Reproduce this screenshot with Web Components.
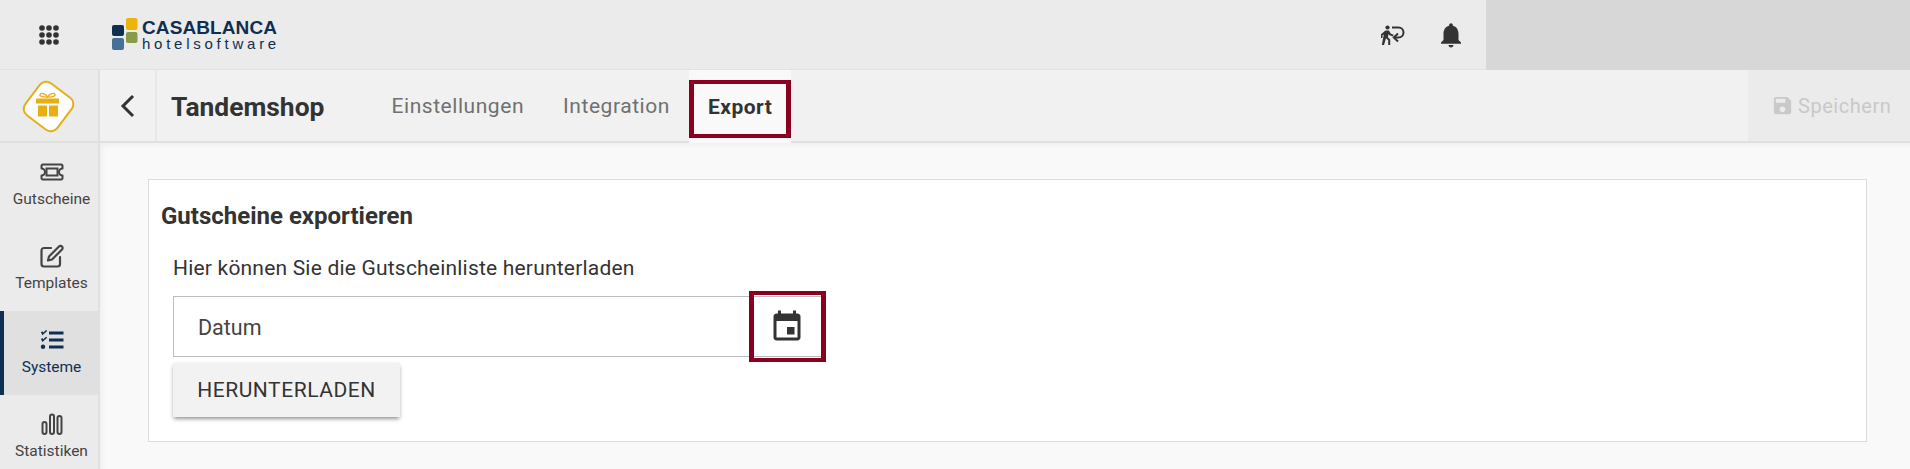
<!DOCTYPE html>
<html lang="de">
<head>
<meta charset="utf-8">
<title>Tandemshop</title>
<style>
  html, body { margin: 0; height: 100%; overflow: hidden; }
  body { font-family: Roboto, "Liberation Sans", sans-serif; color: #333; background: #f9f9f9; }
</style>
</head>
<body>
<app-shell>
  <top-bar slot="top"></top-bar>
  <side-nav slot="side">
    <nav-item label="Gutscheine" icon="ticket"></nav-item>
    <nav-item label="Templates" icon="edit"></nav-item>
    <nav-item label="Systeme" icon="list" active></nav-item>
    <nav-item label="Statistiken" icon="bars"></nav-item>
  </side-nav>
  <page-header slot="header" title="Tandemshop">
    <tab-item>Einstellungen</tab-item>
    <tab-item>Integration</tab-item>
    <tab-item active>Export</tab-item>
  </page-header>
  <export-card slot="main" heading="Gutscheine exportieren">
    <p>Hier können Sie die Gutscheinliste herunterladen</p>
    <date-field label="Datum"></date-field>
    <raised-button>HERUNTERLADEN</raised-button>
  </export-card>
</app-shell>

<script>
const ICONS = {
    ticket: `<svg width="24" height="18" viewBox="0 0 24 18" fill="none" stroke="currentColor" stroke-width="2"><path d="M2.500 1.500h19l1 1v3a3.500 3.500 0 0 0 0 7v3l-1 1h-19l-1-1v-3a3.500 3.500 0 0 0 0-7v-3z" stroke-linejoin="round"/><rect x="6.500" y="5.500" width="11" height="7"/></svg>`,
    edit: `<svg width="24" height="24" viewBox="0 0 24 24" fill="none" stroke="currentColor" stroke-width="2.200" stroke-linejoin="round" stroke-linecap="round"><path d="M11 4H4a2.500 2.500 0 0 0-2.500 2.500V20A2.500 2.500 0 0 0 4 22.500h13.500A2.500 2.500 0 0 0 20 20v-7"/><path d="M19 2.500a2.100 2.100 0 0 1 3 3L12 15.500l-4 1 1-4z"/></svg>`,
    list: `<svg width="24" height="20" viewBox="0 0 24 20" fill="currentColor"><path d="M9 1.500h14.500v3H9zM9 8.500h14.500v3H9zM9 15.500h14.500v3H9z"/><path d="M1 2.200l1.200-1 1.200 1.300L6 0l1.200 1L2.400 5.200zM1 8.900l1.200-1 1.200 1.300 2.600-2.500 1.200 1-4.800 4.200z"/><circle cx="3" cy="16.800" r="2.200"/></svg>`,
    bars: `<svg width="22" height="22" viewBox="0 0 22 22" fill="none" stroke="currentColor" stroke-width="2"><rect x="1.500" y="9" width="4" height="12" rx="2"/><rect x="9" y="1.500" width="4" height="19.500" rx="2"/><rect x="16.500" y="3" width="4" height="18" rx="2"/></svg>`
};

class AppShell extends HTMLElement {
    constructor() {
        super();
        this.attachShadow({mode: "open"}).innerHTML = /* html */`
        <style>
            :host {
                display: grid;
                grid-template-columns: 100px 1fr;
                grid-template-rows: 70px 73px 1fr;
                height: 469px;
                overflow: hidden;
            }
            ::slotted([slot="top"]) { grid-column: 1 / 3; }
            ::slotted([slot="side"]) { grid-row: 2 / 4; }
        </style>
        <slot name="top"></slot>
        <slot name="side"></slot>
        <slot name="header"></slot>
        <div style="box-shadow: inset 8px 8px 8px -8px rgba(0,0,0,.07); padding: 36px 43px 0 48px; min-width: 0;">
            <slot name="main"></slot>
        </div>
        `;
    }
}

class TopBar extends HTMLElement {
    constructor() {
        super();
        this.attachShadow({mode: "open"}).innerHTML = /* html */`
        <style>
            :host {
                display: flex;
                align-items: center;
                background: #ebebeb;
                color: #333;
                border-bottom: 1px solid #e2e2e2;
                box-sizing: border-box;
            }
            .apps { margin-left: 39px; display: flex; }
            .logo { margin-left: 53px; display: flex; gap: 4px; align-items: center; color: #0f2f50; }
            .words { display: flex; flex-direction: column; font-family: "Liberation Sans", Arial, sans-serif; }
            .brand { font-size: 19px; font-weight: 700; line-height: 17px; letter-spacing: .1px; }
            .sub { font-size: 15px; line-height: 15px; letter-spacing: 3.750px; white-space: nowrap; }
            .space { flex: 1; }
            .icon { display: flex; }
            .walk { margin-right: 31px; }
            .bell { margin-right: 20px; }
            .user { width: 424px; height: 70px; background: #d7d7d7; }
        </style>
        <span class="apps">
            <svg width="20" height="20" viewBox="0 0 20 20" fill="currentColor">
                <circle cx="3" cy="3" r="2.800"/><circle cx="10" cy="3" r="2.800"/><circle cx="17" cy="3" r="2.800"/>
                <circle cx="3" cy="10" r="2.800"/><circle cx="10" cy="10" r="2.800"/><circle cx="17" cy="10" r="2.800"/>
                <circle cx="3" cy="17" r="2.800"/><circle cx="10" cy="17" r="2.800"/><circle cx="17" cy="17" r="2.800"/>
            </svg>
        </span>
        <span class="logo">
            <svg width="26" height="33" viewBox="0 0 26 33">
                <rect x="0" y="7" width="12" height="11" rx="2" fill="#0f2f50"/>
                <rect x="0" y="20" width="12" height="12" rx="2" fill="#44709a"/>
                <rect x="14" y="0" width="11.500" height="12" rx="2" fill="#ecb40f"/>
                <rect x="14" y="14" width="11.500" height="11" rx="2" fill="#8a9a48"/>
            </svg>
            <span class="words">
                <span class="brand">CASABLANCA</span>
                <span class="sub">hotelsoftware</span>
            </span>
        </span>
        <span class="space"></span>
        <span class="icon walk">
            <svg width="24" height="20" viewBox="0 0 24 20" fill="currentColor">
                <circle cx="6.500" cy="2.500" r="2.100"/>
                <path d="M4.500 5.500h3.500l1.600 3 3 1.200-.7 1.800-3.800-1.500-.6-.9-.6 3.100 2.300 2.300V20h-2v-4.700l-2.200-2L3 20H.8l2-10.500-1.300.8V13H0V9.300z"/>
                <path d="M11 2.500h6.500a5 5 0 0 1 5 5 5 5 0 0 1-5 5H13" fill="none" stroke="currentColor" stroke-width="2"/>
                <path d="M17 8.500 12.800 12.500 17 16.500" fill="none" stroke="currentColor" stroke-width="2"/>
            </svg>
        </span>
        <span class="icon bell">
            <svg width="30" height="30" viewBox="0 0 24 24" fill="currentColor"><path d="M12 22c1.100 0 2-.9 2-2h-4c0 1.100.9 2 2 2zm6-6v-5c0-3.070-1.630-5.640-4.500-6.320V4c0-.83-.67-1.500-1.500-1.500s-1.500.67-1.500 1.500v.68C7.640 5.360 6 7.920 6 11v5l-2 2v1h16v-1l-2-2z"/></svg>
        </span>
        <span class="user"></span>
        `;
    }
}

class SideNav extends HTMLElement {
    constructor() {
        super();
        this.attachShadow({mode: "open"}).innerHTML = /* html */`
        <style>
            :host {
                display: block;
                background: #ebebeb;
                border-right: 2px solid #e0e0e0;
                box-sizing: border-box;
            }
            .brand {
                height: 73px;
                display: flex;
                align-items: center;
                justify-content: center;
                border-bottom: 2px solid #e0e0e0;
                box-sizing: border-box;
            }
        </style>
        <div class="brand">
            <svg width="60" height="60" viewBox="0 0 60 60">
                <rect x="9.500" y="10.500" width="40" height="40" rx="8" fill="#fff" stroke="#e6b015" stroke-width="2" transform="rotate(37 29.500 30.500)"/>
                <path d="M28.500 21c-2-3.500-6.500-4.500-7.500-2.700s3 3 7.500 2.700c4.500 .3 8.500-.9 7.500-2.700s-5.500-.8-7.500 2.700z" fill="none" stroke="#e6b015" stroke-width="1.300"/>
                <rect x="17" y="22.500" width="23" height="5" fill="#e6b015"/>
                <rect x="19" y="29.500" width="9" height="11" fill="#e6b015"/>
                <rect x="30" y="29.500" width="9" height="11" fill="#e6b015"/>
            </svg>
        </div>
        <slot></slot>
        `;
    }
}

class NavItem extends HTMLElement {
    constructor() {
        super();
        this.attachShadow({mode: "open"});
    }

    connectedCallback() {
        this.shadowRoot.innerHTML = /* html */`
        <style>
            :host {
                display: flex;
                flex-direction: column;
                align-items: center;
                height: 84px;
                padding: 16px 0 0 5px;
                box-sizing: border-box;
                font-size: 15.500px;
                color: #444;
            }
            :host([active]) {
                background: #e0e0e0;
                color: #0f2f50;
                border-left: 4px solid #0f2f50;
                padding-left: 1px;
            }
            .ic { height: 26px; display: flex; align-items: center; }
            .lb { margin-top: 5px; line-height: 18px; }
        </style>
        <span class="ic">${ICONS[this.getAttribute("icon")]}</span>
        <span class="lb">${this.getAttribute("label")}</span>
        `;
    }
}

class PageHeader extends HTMLElement {
    constructor() {
        super();
        this.attachShadow({mode: "open"});
    }

    connectedCallback() {
        this.shadowRoot.innerHTML = /* html */`
        <style>
            :host {
                display: flex;
                background: #f1f1f1;
                border-bottom: 2px solid #e0e0e0;
                box-sizing: border-box;
                height: 73px;
            }
            .back {
                width: 57px;
                border-right: 2px solid #e8e8e8;
                box-sizing: border-box;
                display: flex;
                align-items: center;
                justify-content: center;
                color: #333;
            }
            h1 {
                margin: 3px 0 0 14px;
                font-size: 26.400px;
                font-weight: 700;
                align-self: center;
                width: 201px;
                line-height: 1;
            }
            .tabs { display: flex; align-items: stretch; gap: 0; flex: 1; }
            .save {
                width: 162px;
                background: #ebebeb;
                display: flex;
                align-items: center;
                gap: 4px;
                padding-left: 23px;
                box-sizing: border-box;
                color: #c9c9c9;
                font-size: 20px;
                letter-spacing: .55px;
            }
        </style>
        <span class="back">
            <svg width="16" height="24" viewBox="0 0 16 24" fill="none" stroke="currentColor" stroke-width="3"><path d="M13 2 3 12l10 10"/></svg>
        </span>
        <h1>${this.getAttribute("title")}</h1>
        <div class="tabs"><slot></slot></div>
        <div class="save">
            <svg width="23" height="23" viewBox="0 0 24 24" fill="currentColor"><path d="M17 3H5c-1.110 0-2 .9-2 2v14c0 1.100.89 2 2 2h14c1.100 0 2-.9 2-2V7l-4-4zm-5 16c-1.660 0-3-1.340-3-3s1.340-3 3-3 3 1.340 3 3-1.340 3-3 3zm3-10H5V5h10v4z"/></svg>
            Speichern
        </div>
        `;
    }
}

class TabItem extends HTMLElement {
    constructor() {
        super();
        this.attachShadow({mode: "open"}).innerHTML = /* html */`
        <style>
            :host {
                display: flex;
                align-items: center;
                position: relative;
                padding: 1px 19.500px 0;
                font-size: 21px;
                letter-spacing: .55px;
                color: #707070;
            }
            :host([active]) {
                color: #333;
                font-weight: 700;
                letter-spacing: .5px;
                background: #f9f9f9;
                padding: 1px 19px 0 18.500px;
                margin-bottom: -2px;
            }
            :host([active])::after {
                content: "";
                position: absolute;
                inset: 10px 0 5px 0;
                border: solid #8a0020;
                border-width: 4px 5px;
                box-sizing: border-box;
            }
        </style>
        <slot></slot>
        `;
    }
}

class ExportCard extends HTMLElement {
    constructor() {
        super();
        this.attachShadow({mode: "open"});
    }

    connectedCallback() {
        this.shadowRoot.innerHTML = /* html */`
        <style>
            :host {
                display: block;
                height: 263px;
                box-sizing: border-box;
                background: #fff;
                border: 1px solid #dcdcdc;
                padding: 21px 12px 0;
            }
            h2 {
                margin: 0;
                font-size: 24px;
                font-weight: 700;
                line-height: 30px;
                color: #333;
            }
            .body {
                padding: 0 0 0 12px;
                margin-top: 26px;
                font-size: 21px;
            }
            ::slotted(p) { margin: 0 0 17px; line-height: 22px; letter-spacing: .2px; color: #333; }
        </style>
        <h2>${this.getAttribute("heading")}</h2>
        <div class="body"><slot></slot></div>
        `;
    }
}

class DateField extends HTMLElement {
    constructor() {
        super();
        this.attachShadow({mode: "open"});
    }

    connectedCallback() {
        this.shadowRoot.innerHTML = /* html */`
        <style>
            :host {
                display: flex;
                align-items: center;
                position: relative;
                width: 651px;
                height: 61px;
                box-sizing: border-box;
                border: 1px solid #bdbdbd;
                padding: 2px 0 0 24px;
                font-size: 21.500px;
                color: #444;
            }
            .cal {
                position: absolute;
                right: -3px;
                top: -6px;
                width: 77px;
                height: 71px;
                box-sizing: border-box;
                border: solid #8a0020;
                border-width: 4px 5px;
                padding-right: 2px;
                display: flex;
                align-items: center;
                justify-content: center;
                color: #333;
            }
        </style>
        <span>${this.getAttribute("label")}</span>
        <span class="cal">
            <svg width="36" height="36" viewBox="0 0 24 24" fill="currentColor"><path d="M17 12h-5v5h5v-5zM16 1v2H8V1H6v2H5c-1.110 0-1.990.9-1.990 2L3 19c0 1.100.89 2 2 2h14c1.100 0 2-.9 2-2V5c0-1.100-.9-2-2-2h-1V1h-2zm3 18H5V8h14v11z"/></svg>
        </span>
        `;
    }
}

class RaisedButton extends HTMLElement {
    constructor() {
        super();
        this.attachShadow({mode: "open"}).innerHTML = /* html */`
        <style>
            :host {
                display: flex;
                align-items: center;
                justify-content: center;
                width: 227px;
                height: 54px;
                margin-top: 6px;
                background: #f2f2f2;
                color: #333;
                font-size: 21px;
                letter-spacing: .55px;
                box-shadow: 0 3px 4px -1px rgba(0,0,0,.35), 0 1px 4px rgba(0,0,0,.12);
            }
        </style>
        <slot></slot>
        `;
    }
}

customElements.define("app-shell", AppShell);
customElements.define("top-bar", TopBar);
customElements.define("side-nav", SideNav);
customElements.define("nav-item", NavItem);
customElements.define("page-header", PageHeader);
customElements.define("tab-item", TabItem);
customElements.define("export-card", ExportCard);
customElements.define("date-field", DateField);
customElements.define("raised-button", RaisedButton);
</script>
</body>
</html>
